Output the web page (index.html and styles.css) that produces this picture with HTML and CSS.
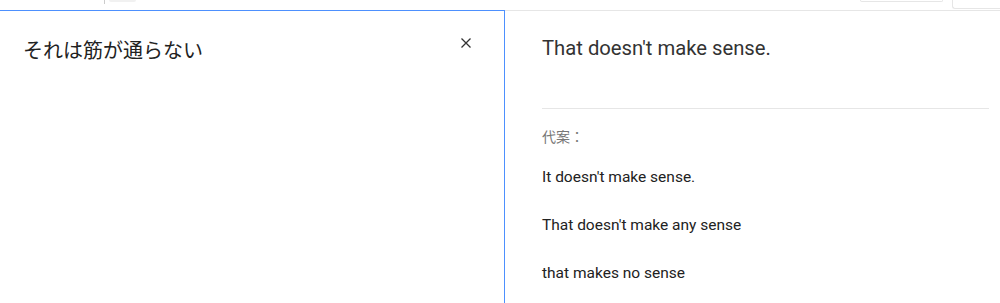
FILE: index.html
```html
<!DOCTYPE html>
<html lang="ja">
<head>
<meta charset="utf-8">
<title>翻訳</title>
<link rel="stylesheet" href="styles.css">
</head>
<body>
<div class="toolbar">
  <div class="tb-left">
    <span class="tb-divider"></span>
    <span class="tb-chip"></span>
  </div>
  <div class="tb-right">
    <span class="tb-box"></span>
    <span class="tb-box2"></span>
  </div>
</div>
<div class="panels">
  <section class="source">
    <div class="source-row">
      <div class="source-text">それは筋が通らない</div>
      <button class="clear" aria-label="クリア">
        <svg width="10" height="10" viewBox="0 0 10 10"><path d="M0.5 0.5 L9.5 9.5 M9.5 0.5 L0.5 9.5" stroke="#333" stroke-width="1.3" fill="none"/></svg>
      </button>
    </div>
  </section>
  <section class="target">
    <div class="result">That doesn't make sense.</div>
    <hr class="divider">
    <div class="alt-label">代案：</div>
    <ul class="alts">
      <li>It doesn't make sense.</li>
      <li>That doesn't make any sense</li>
      <li>that makes no sense</li>
    </ul>
  </section>
</div>
</body>
</html>
```

FILE: styles.css
```css
html, body {
  margin: 0;
  padding: 0;
  background: #fff;
  font-family: Roboto, "Noto Sans CJK JP", sans-serif;
  overflow: hidden;
}
.toolbar {
  height: 10px;
  display: flex;
  justify-content: space-between;
  align-items: flex-start;
}
.tb-left {
  display: flex;
  align-items: flex-start;
  padding-left: 104px;
}
.tb-divider {
  width: 1px;
  height: 4px;
  background: #ccc;
}
.tb-chip {
  margin-left: 4px;
  width: 27px;
  height: 2px;
  background: #f1f1f1;
  border-radius: 0 0 4px 4px;
}
.tb-right {
  display: flex;
  align-items: flex-start;
}
.tb-box {
  width: 81px;
  height: 1px;
  border: 1px solid #e6e6e6;
  border-top: none;
  border-radius: 0 0 3px 3px;
}
.tb-box2 {
  margin-left: 9px;
  width: 47px;
  height: 8px;
  border-left: 1px solid #e6e6e6;
  border-bottom: 1px solid #e6e6e6;
  border-radius: 0 0 0 3px;
}
.panels {
  display: flex;
  border-top: 1px solid #e6e6e6;
  height: 292px;
}
.source {
  margin-top: -1px;
  border-top: 1px solid #4d90fe;
  border-right: 1px solid #4d90fe;
  padding: 26px 33px 0 23px;
  box-sizing: border-box;
  width: 505px;
}
.source-row {
  display: flex;
  justify-content: space-between;
  align-items: flex-start;
}
.source-text {
  font-size: 20px;
  line-height: 28px;
  color: #222;
}
.clear {
  border: none;
  background: none;
  padding: 0;
  margin-top: 1px;
  width: 10px;
  height: 10px;
  display: flex;
  cursor: pointer;
}
.target {
  flex: 1;
  padding: 23px 11px 0 37px;
}
.result {
  font-size: 20.25px;
  line-height: 28px;
  color: #333;
}
.divider {
  border: none;
  border-top: 1px solid #e6e6e6;
  margin: 46px 0 0 0;
}
.alt-label {
  margin-top: 18px;
  font-size: 14px;
  line-height: 20px;
  color: #777;
}
.alts {
  list-style: none;
  margin: 0;
  padding: 0;
}
.alts li {
  font-size: 15.5px;
  line-height: 20px;
  color: #222;
  margin-top: 28px;
}
.alts li:first-child {
  margin-top: 20px;
}
```
